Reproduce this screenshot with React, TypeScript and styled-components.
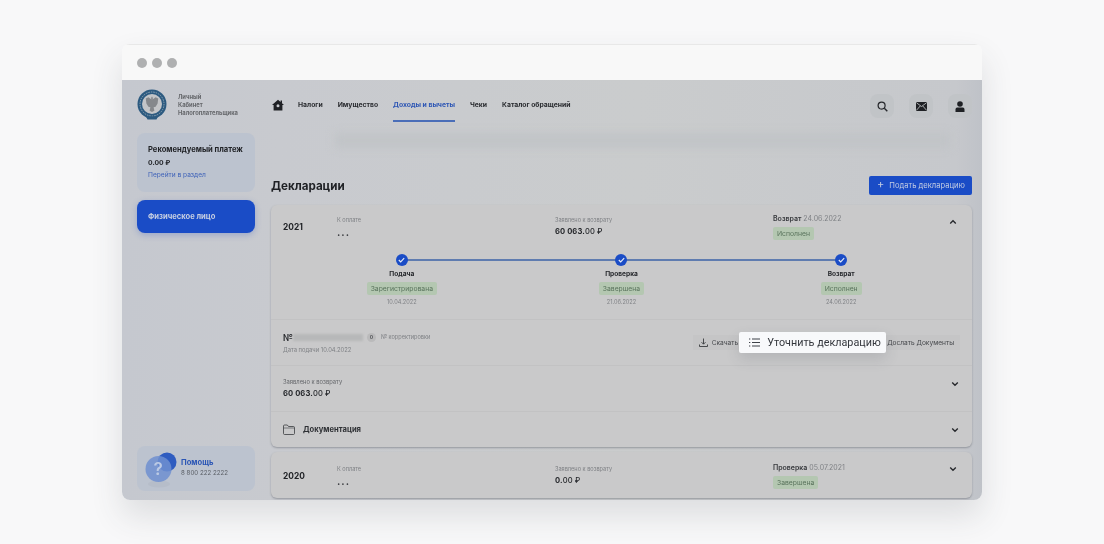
import React from 'react';
import { createGlobalStyle, styled } from 'styled-components';

const GlobalStyle = createGlobalStyle`
    html, body {
        margin: 0;
        padding: 0;
        background: #f8f8f9;
    }
    body {
        width: 1104px;
        height: 544px;
        overflow: hidden;
        font-family: "Inter", "Roboto", "Liberation Sans", sans-serif;
    }
`;

const navItems = [
    { label: 'Налоги', active: false },
    { label: 'Имущество', active: false },
    { label: 'Доходы и вычеты', active: true },
    { label: 'Чеки', active: false },
    { label: 'Каталог обращений', active: false },
];

const steps = [
    { title: 'Подача', status: 'Зарегистрирована', date: '10.04.2022' },
    { title: 'Проверка', status: 'Завершена', date: '21.06.2022' },
    { title: 'Возврат', status: 'Исполнен', date: '24.06.2022' },
];

const Chevron: React.FC<{ up?: boolean }> = ({ up }) => (
    <ChevronIcon viewBox="0 0 10 10" $up={up}>
        <path d="M1.5 3.2 5 6.6l3.5-3.4" fill="none" stroke="#26282c" strokeWidth="1.7" />
    </ChevronIcon>
);

const Emblem = () => (
    <svg width="30" height="31" viewBox="0 0 30 31">
        <circle cx="15" cy="15" r="14.5" fill="#2c5a80" />
        <circle cx="15" cy="15" r="12" fill="none" stroke="#8ea3b4" strokeWidth="1" strokeDasharray="1.5 1" />
        <circle cx="15" cy="15" r="10" fill="#c3c5c8" />
        <path d="M15 7.5c1 .8 1 2 .6 3l3-2.2 2.6 1.2-.6 5-2 3.2-2 .6.8 3.4-2.4 1.4-2.4-1.4.8-3.4-2-.6-2-3.2-.6-5 2.6-1.2 3 2.2c-.4-1-.4-2.2.6-3z" fill="#85888c" />
        <path d="M9 27.5h12l-1.5 3h-9z" fill="#2c5a80" />
    </svg>
);

const HelpIcon = () => (
    <svg width="32" height="38" viewBox="0 0 32 38">
        <ellipse cx="14" cy="33" rx="11" ry="3.5" fill="#b6bdc9" />
        <circle cx="22" cy="11" r="9.5" fill="#2f5cc0" />
        <circle cx="13.500" cy="18" r="13" fill="#6f8fd0" opacity="0.85" />
        <text x="13" y="24" fontSize="17" fontWeight="600" fill="#bccae4" textAnchor="middle" fontFamily="Inter, sans-serif">?</text>
    </svg>
);

const App: React.FC = () => {
    return (
        <>
            <GlobalStyle />
            <Page>
                <Window>
                    <TitleBar>
                        <Dot />
                        <Dot />
                        <Dot />
                    </TitleBar>
                    <Body>
                        <Sidebar>
                            <LogoRow>
                                <Emblem />
                                <LogoText>
                                    <span>Личный</span>
                                    <span>Кабинет</span>
                                    <span>Налогоплательщика</span>
                                </LogoText>
                            </LogoRow>
                            <PaymentCard>
                                <PaymentTitle>Рекомендуемый платеж</PaymentTitle>
                                <PaymentValue>0.00 ₽</PaymentValue>
                                <PaymentLink>Перейти в раздел</PaymentLink>
                            </PaymentCard>
                            <ProfileCard>Физическое лицо</ProfileCard>
                            <HelpCard>
                                <HelpIcon />
                                <div>
                                    <HelpTitle>Помощь</HelpTitle>
                                    <HelpPhone>8 800 222 2222</HelpPhone>
                                </div>
                            </HelpCard>
                        </Sidebar>
                        <Main>
                            <Header>
                                <HomeLink>
                                    <svg width="12" height="12" viewBox="0 0 12 12">
                                        <path d="M6 .8 0 6h1.6v5.4h8.800V6H12L10 4.200V1.500H8.600V3zM6 5.200a1.500 1.500 0 1 1 0 3 1.500 1.500 0 0 1 0-3z" fill="#1f2125" fillRule="evenodd" />
                                    </svg>
                                </HomeLink>
                                <Nav>
                                    {navItems.map((item) => (
                                        <NavItem key={item.label} $active={item.active}>{item.label}</NavItem>
                                    ))}
                                </Nav>
                                <HeaderIcons>
                                    <IconButton>
                                        <svg width="11" height="11" viewBox="0 0 11 11">
                                            <circle cx="4.6" cy="4.6" r="3.5" fill="none" stroke="#26282c" strokeWidth="1.2" />
                                            <path d="m7.3 7.3 3 3" stroke="#26282c" strokeWidth="1.4" />
                                        </svg>
                                    </IconButton>
                                    <IconButton>
                                        <svg width="11" height="9" viewBox="0 0 11 9">
                                            <rect width="11" height="9" rx="1" fill="#1f2125" />
                                            <path d="m.5.8 5 3.700 5-3.700M.5 8.200l3.800-4.300m6.200 4.300L6.700 3.900" fill="none" stroke="#cdcfd1" strokeWidth="0.8" />
                                        </svg>
                                    </IconButton>
                                    <IconButton>
                                        <svg width="10" height="11" viewBox="0 0 10 11">
                                            <circle cx="5" cy="3" r="2.8" fill="#1f2125" />
                                            <path d="M.5 11V8.500c0-1.400 1.200-2 2-2h5c.8 0 2 .6 2 2V11z" fill="#1f2125" />
                                        </svg>
                                    </IconButton>
                                </HeaderIcons>
                            </Header>
                            <BlurStrip />
                            <TitleRow>
                                <PageTitle>Декларации</PageTitle>
                                <SubmitButton><Plus>+</Plus>Подать декларацию</SubmitButton>
                            </TitleRow>
                            <Card>
                                <SummaryRow>
                                    <Year>2021</Year>
                                    <Cell>
                                        <TinyLabel>К оплате</TinyLabel>
                                        <Dots>...</Dots>
                                    </Cell>
                                    <Cell>
                                        <TinyLabel>Заявлено к возврату</TinyLabel>
                                        <Amount>60 063.<Cents>00 ₽</Cents></Amount>
                                    </Cell>
                                    <Cell>
                                        <StatusLine><b>Возврат</b> 24.06.2022</StatusLine>
                                        <Badge>Исполнен</Badge>
                                    </Cell>
                                    <Chevron up />
                                </SummaryRow>
                                <Stepper>
                                    {steps.map((step) => (
                                        <Step key={step.title}>
                                            <StepCircle>
                                                <svg width="7" height="6" viewBox="0 0 7 6">
                                                    <path d="m.8 3 1.9 1.9L6.200 1.200" fill="none" stroke="#e8edf6" strokeWidth="1.1" />
                                                </svg>
                                            </StepCircle>
                                            <StepTitle>{step.title}</StepTitle>
                                            <Badge>{step.status}</Badge>
                                            <StepDate>{step.date}</StepDate>
                                        </Step>
                                    ))}
                                </Stepper>
                                <DocRow>
                                    <div>
                                        <DocNumberLine>
                                            <DocNumber>№</DocNumber>
                                            <Redacted />
                                            <Zero>0</Zero>
                                            <TinyLabel>№ корректировки</TinyLabel>
                                        </DocNumberLine>
                                        <DocDate>Дата подачи 10.04.2022</DocDate>
                                    </div>
                                    <Actions>
                                        <ActionButton>
                                            <svg width="9" height="9" viewBox="0 0 9 9">
                                                <path d="M4.5.5V6M2.500 4.200l2 2 2-2M.5 6.500v2h8v-2" fill="none" stroke="#3a3c40" strokeWidth="0.9" />
                                            </svg>
                                            Скачать
                                        </ActionButton>
                                        <HighlightButton>
                                            <svg width="11" height="9" viewBox="0 0 11 9">
                                                <path d="M3 1h8M3 4.500h8M3 8h8M0 1h1.300M0 4.500h1.300M0 8h1.300" stroke="#3d4148" strokeWidth="1" />
                                            </svg>
                                            Уточнить декларацию
                                        </HighlightButton>
                                        <LastAction>Дослать Документы</LastAction>
                                    </Actions>
                                </DocRow>
                                <RefundRow>
                                    <div>
                                        <RefundLabel>Заявлено к возврату</RefundLabel>
                                        <Amount>60 063.<Cents>00 ₽</Cents></Amount>
                                    </div>
                                    <Chevron />
                                </RefundRow>
                                <DocsRow>
                                    <DocsTitle>
                                        <svg width="12" height="11" viewBox="0 0 12 11">
                                            <path d="M.5 2v7.500c0 .6.4 1 1 1h9c.6 0 1-.4 1-1v-6c0-.6-.4-1-1-1h-5L4.300 1H1.500c-.6 0-1 .4-1 1z" fill="none" stroke="#3a3c40" strokeWidth="0.8" />
                                            <path d="M.5 4h11" stroke="#3a3c40" strokeWidth="0.6" />
                                        </svg>
                                        Документация
                                    </DocsTitle>
                                    <Chevron />
                                </DocsRow>
                            </Card>
                            <SecondCard>
                                <SummaryRow $low>
                                    <Year>2020</Year>
                                    <Cell>
                                        <TinyLabel>К оплате</TinyLabel>
                                        <Dots>...</Dots>
                                    </Cell>
                                    <Cell>
                                        <TinyLabel>Заявлено к возврату</TinyLabel>
                                        <Amount>0.<Cents>00 ₽</Cents></Amount>
                                    </Cell>
                                    <Cell>
                                        <StatusLine><b>Проверка</b> 05.07.2021</StatusLine>
                                        <Badge>Завершена</Badge>
                                    </Cell>
                                    <Chevron />
                                </SummaryRow>
                            </SecondCard>
                        </Main>
                    </Body>
                </Window>
            </Page>
        </>
    );
};

export default App;

const Page = styled.div`
    width: 1104px;
    height: 544px;
    padding: 44px 122px 0;
    box-sizing: border-box;
    overflow: hidden;
    background: #f8f8f9;
`;

const Window = styled.div`
    width: 860px;
    height: 456px;
    border-radius: 8px;
    overflow: hidden;
    box-shadow: 0 16px 32px rgba(60, 64, 72, 0.14);
    filter: blur(0.35px);
`;

const TitleBar = styled.div`
    height: 36px;
    box-sizing: border-box;
    padding-left: 15px;
    display: flex;
    align-items: center;
    gap: 5px;
    background: #f8f8f8;
    border-top: 1px solid #e8e8e8;
`;

const Dot = styled.span`
    width: 10px;
    height: 10px;
    border-radius: 50%;
    background: #afb0b1;
`;

const Body = styled.div`
    height: 420px;
    display: flex;
    background: linear-gradient(90deg, #c5c8cf 0%, #c8cacf 18%, #cacccd 60%, #c6c8cc 97%, #bfc2c8 100%);
    overflow: hidden;
`;

const Sidebar = styled.aside`
    width: 149px;
    flex: none;
    box-sizing: border-box;
    padding: 9px 16px 9px 15px;
    display: flex;
    flex-direction: column;
`;

const LogoRow = styled.div`
    display: flex;
    align-items: center;
    gap: 11px;
    height: 31px;
    margin-bottom: 13px;
`;

const LogoText = styled.div`
    display: flex;
    flex-direction: column;
    font-size: 5.8px;
    line-height: 8px;
    font-weight: 700;
    color: #66686c;
`;

const PaymentCard = styled.div`
    height: 59px;
    box-sizing: border-box;
    padding: 11px 11px 0;
    border-radius: 8px;
    background: #bcc3cf;
`;

const PaymentTitle = styled.div`
    font-size: 7.6px;
    line-height: 11px;
    font-weight: 700;
    color: #212327;
    white-space: nowrap;
`;

const PaymentValue = styled.div`
    margin-top: 3px;
    font-size: 6.8px;
    line-height: 9px;
    font-weight: 700;
    color: #212327;
`;

const PaymentLink = styled.div`
    margin-top: 4px;
    font-size: 6.6px;
    line-height: 9px;
    color: #3d61b8;
`;

const ProfileCard = styled.div`
    margin-top: 8px;
    height: 33px;
    box-sizing: border-box;
    padding-left: 11px;
    display: flex;
    align-items: center;
    border-radius: 8px;
    background: #1a4cc6;
    box-shadow: 0 2px 6px rgba(40, 80, 190, 0.28);
    font-size: 7.6px;
    font-weight: 700;
    color: #c8d0e2;
`;

const HelpCard = styled.div`
    margin-top: auto;
    height: 45px;
    box-sizing: border-box;
    padding: 5px 0 0 8px;
    display: flex;
    gap: 4px;
    border-radius: 8px;
    background: #bcc3cf;
`;

const HelpTitle = styled.div`
    margin-top: 6px;
    font-size: 7.6px;
    line-height: 11px;
    font-weight: 700;
    color: #2a55b5;
`;

const HelpPhone = styled.div`
    font-size: 6.2px;
    line-height: 10px;
    color: #5b5f66;
    white-space: nowrap;
`;

const Main = styled.main`
    width: 701px;
    flex: none;
`;

const Header = styled.header`
    height: 42px;
    display: flex;
    align-items: flex-start;
`;

const HomeLink = styled.div`
    width: 27px;
    height: 42px;
    padding: 8px 0 0 1px;
    box-sizing: border-box;
    display: flex;
    align-items: center;
`;

const Nav = styled.nav`
    display: flex;
    gap: 15px;
    flex: 1;
`;

const NavItem = styled.div<{ $active: boolean }>`
    height: 42px;
    box-sizing: border-box;
    padding-top: 8px;
    display: flex;
    align-items: center;
    font-size: 6.8px;
    font-weight: 700;
    white-space: nowrap;
    color: ${(p) => (p.$active ? '#2c55b4' : '#2a2c30')};
    border-bottom: 2px solid ${(p) => (p.$active ? '#4a6eb8' : 'transparent')};
`;

const HeaderIcons = styled.div`
    margin-top: 14px;
    display: flex;
    gap: 15px;
`;

const IconButton = styled.div`
    width: 24px;
    height: 24px;
    border-radius: 8px;
    display: flex;
    align-items: center;
    justify-content: center;
    background: #c1c4c7;
`;

const BlurStrip = styled.div`
    margin: 11px 22px 0 64px;
    height: 15px;
    background: #c1c4c7;
    filter: blur(4px);
`;

const TitleRow = styled.div`
    margin-top: 28px;
    height: 19px;
    display: flex;
    align-items: center;
    justify-content: space-between;
`;

const PageTitle = styled.h1`
    margin: 0;
    font-size: 11.6px;
    font-weight: 700;
    color: #1f2125;
`;

const SubmitButton = styled.button`
    width: 103px;
    height: 19px;
    padding: 0 0 0 8px;
    display: flex;
    align-items: center;
    gap: 5px;
    border: 0;
    border-radius: 2px;
    background: #1a4cc6;
    font-family: inherit;
    font-size: 7.6px;
    color: #c4cde2;
    white-space: nowrap;
`;

const Plus = styled.span`
    font-size: 11px;
    line-height: 11px;
    height: 13px;
`;

const Card = styled.section`
    margin-top: 10px;
    border-radius: 6px;
    background: #c9c9ca;
    box-shadow: 0 1px 2px rgba(70, 74, 85, 0.4);
`;

const SecondCard = styled(Card)`
    margin-top: 5px;
`;

const SummaryRow = styled.div<{ $low?: boolean }>`
    height: 46px;
    box-sizing: border-box;
    padding: ${(p) => (p.$low ? '2px 13px 0 12px' : '0 13px 2px 12px')};
    display: grid;
    grid-template-columns: 54px 218px 218px 1fr 10px;
    align-items: center;
    > svg {
        margin-top: ${(p) => (p.$low ? '-14px' : '-10px')};
    }
`;

const Year = styled.div`
    font-size: 8.4px;
    font-weight: 700;
    color: #212327;
`;

const Cell = styled.div`
    display: flex;
    flex-direction: column;
    align-items: flex-start;
`;

const TinyLabel = styled.span`
    font-size: 5.6px;
    line-height: 8px;
    color: #7f8185;
    white-space: nowrap;
`;

const Dots = styled.div`
    margin-top: 2px;
    font-size: 10px;
    line-height: 12px;
    letter-spacing: 1px;
    font-weight: 700;
    color: #34363a;
`;

const Amount = styled.div`
    margin-top: 2px;
    font-size: 7.6px;
    line-height: 12px;
    font-weight: 700;
    letter-spacing: 0.1px;
    color: #26282c;
    white-space: nowrap;
`;

const Cents = styled.span`
    font-weight: 500;
`;

const StatusLine = styled.div`
    font-size: 7px;
    line-height: 10px;
    color: #7f8185;
    white-space: nowrap;
    b {
        font-weight: 600;
        color: #36383c;
    }
`;

const Badge = styled.span`
    margin-top: 3px;
    padding: 0 4px;
    height: 13px;
    display: inline-flex;
    align-items: center;
    border-radius: 2px;
    background: #b4c7b1;
    font-size: 6.8px;
    color: #5a745d;
    white-space: nowrap;
`;

const ChevronIcon = styled.svg<{ $up?: boolean }>`
    width: 8px;
    height: 8px;
    transform: ${(p) => (p.$up ? 'rotate(180deg)' : 'none')};
`;

const Stepper = styled.div`
    position: relative;
    height: 69px;
    box-sizing: border-box;
    padding: 3px 21px 0;
    display: grid;
    grid-template-columns: repeat(3, 1fr);
    border-bottom: 1px solid #c2c2c3;
    &::before {
        content: '';
        position: absolute;
        top: 8px;
        left: 131px;
        right: 131px;
        height: 1.5px;
        background: #5f7cb0;
    }
`;

const Step = styled.div`
    position: relative;
    display: flex;
    flex-direction: column;
    align-items: center;
`;

const StepCircle = styled.div`
    width: 12px;
    height: 12px;
    border-radius: 50%;
    background: #1a4cc6;
    display: flex;
    align-items: center;
    justify-content: center;
`;

const StepTitle = styled.div`
    margin-top: 4px;
    font-size: 6.6px;
    line-height: 9px;
    font-weight: 700;
    color: #26282c;
`;

const StepDate = styled.div`
    margin-top: 4px;
    font-size: 5.6px;
    line-height: 7px;
    color: #7f8185;
`;

const DocRow = styled.div`
    height: 46px;
    box-sizing: border-box;
    padding: 0 12px;
    display: flex;
    align-items: center;
    justify-content: space-between;
    border-bottom: 1px solid #c2c2c3;
`;

const DocNumberLine = styled.div`
    display: flex;
    align-items: center;
`;

const DocNumber = styled.span`
    font-size: 9px;
    font-weight: 700;
    color: #26282c;
`;

const Redacted = styled.span`
    width: 70px;
    height: 7px;
    margin-right: 4px;
    background: #b7b8b9;
    filter: blur(1.2px);
`;

const Zero = styled.span`
    width: 9px;
    height: 9px;
    margin-right: 5px;
    border-radius: 50%;
    display: flex;
    align-items: center;
    justify-content: center;
    background: #bababb;
    font-size: 5px;
    font-weight: 700;
    color: #55575b;
`;

const DocDate = styled.div`
    margin-top: 3px;
    font-size: 5.8px;
    line-height: 8px;
    color: #7f8185;
`;

const Actions = styled.div`
    display: flex;
    align-items: center;
`;

const ActionButton = styled.button`
    height: 15px;
    padding: 0 1px 0 6px;
    display: flex;
    align-items: center;
    gap: 4px;
    border: 0;
    background: #c5c5c6;
    font-family: inherit;
    font-size: 6.6px;
    color: #45474b;
    white-space: nowrap;
`;

const LastAction = styled(ActionButton)`
    padding: 0 6px 0 1px;
`;

const HighlightButton = styled.button`
    position: relative;
    width: 147px;
    height: 21px;
    padding: 0 0 0 10px;
    display: flex;
    align-items: center;
    gap: 7px;
    border: 0;
    border-radius: 2px;
    background: #f8f9fb;
    box-shadow: 0 6px 14px rgba(70, 74, 85, 0.16);
    font-family: "Roboto", "Inter", sans-serif;
    font-size: 10.8px;
    color: #34373d;
    white-space: nowrap;
    svg {
        flex: none;
    }
`;

const RefundRow = styled.div`
    height: 46px;
    box-sizing: border-box;
    padding: 0 13px 0 12px;
    display: flex;
    align-items: center;
    justify-content: space-between;
    border-bottom: 1px solid #c2c2c3;
    > svg {
        margin-top: -10px;
    }
`;

const RefundLabel = styled.div`
    font-size: 5.8px;
    line-height: 8px;
    color: #65676b;
`;

const DocsRow = styled.div`
    height: 35px;
    box-sizing: border-box;
    padding: 0 13px 0 12px;
    display: flex;
    align-items: center;
    justify-content: space-between;
`;

const DocsTitle = styled.div`
    display: flex;
    align-items: center;
    gap: 8px;
    font-size: 7.6px;
    font-weight: 700;
    color: #2e3034;
`;
